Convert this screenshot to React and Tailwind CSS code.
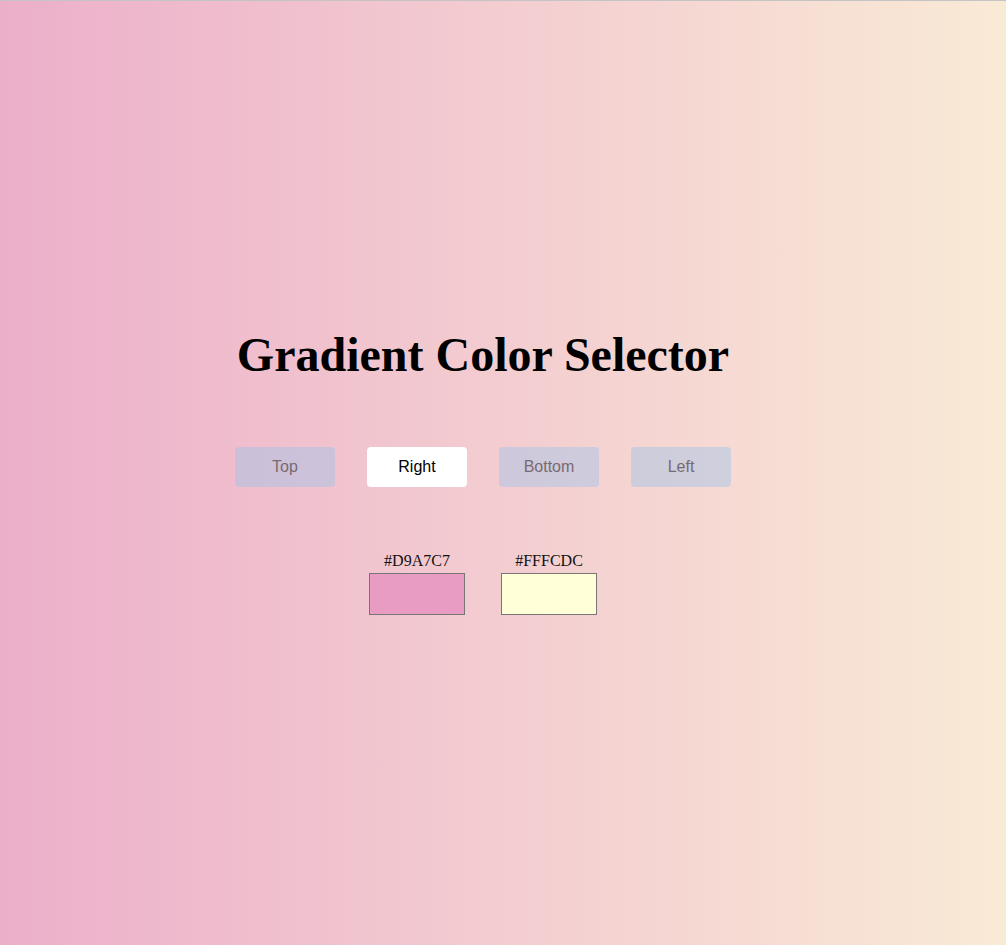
import { useState } from "react";

// --- Direction buttons ---
function DirectionButtons({ direction, setDirection }) {
  const dirs = ["Top", "Right", "Bottom", "Left"];
  return (
    <div className="flex gap-8">
      {dirs.map((d) => (
        <button
          key={d}
          onClick={() => setDirection(d)}
          className={`w-[100px] h-10 rounded text-base font-['Liberation_Sans',Arial,sans-serif] ${
            direction === d
              ? "bg-white text-black"
              : "bg-[rgba(160,196,232,0.45)] text-[#786a70]"
          }`}
        >
          {d}
        </button>
      ))}
    </div>
  );
}

// --- Color swatch with hex label ---
function Swatch({ hex, shown }) {
  return (
    <div className="flex flex-col items-center">
      <span className="text-base leading-[18px] text-[#111]">{hex}</span>
      <div className="mt-[3px] w-[96px] h-[42px] border border-[#767676]" style={{ background: shown }} />
    </div>
  );
}

export default function App() {
  const [direction, setDirection] = useState("Right");

  return (
    <div className="min-h-screen border-t border-[#c4c4c4] bg-gradient-to-r from-[#ecafca] to-[#f9ead6] font-['Liberation_Serif','Times_New_Roman',serif]">
      <div className="w-[966px] pt-[326px] flex flex-col items-center">
        <h1 className="text-5xl font-bold leading-[56px] text-black">Gradient Color Selector</h1>
        <div className="mt-16">
          <DirectionButtons direction={direction} setDirection={setDirection} />
        </div>
        <div className="mt-[65px] flex gap-9">
          <Swatch hex="#D9A7C7" shown="#e89cc4" />
          <Swatch hex="#FFFCDC" shown="#ffffd8" />
        </div>
      </div>
    </div>
  );
}
